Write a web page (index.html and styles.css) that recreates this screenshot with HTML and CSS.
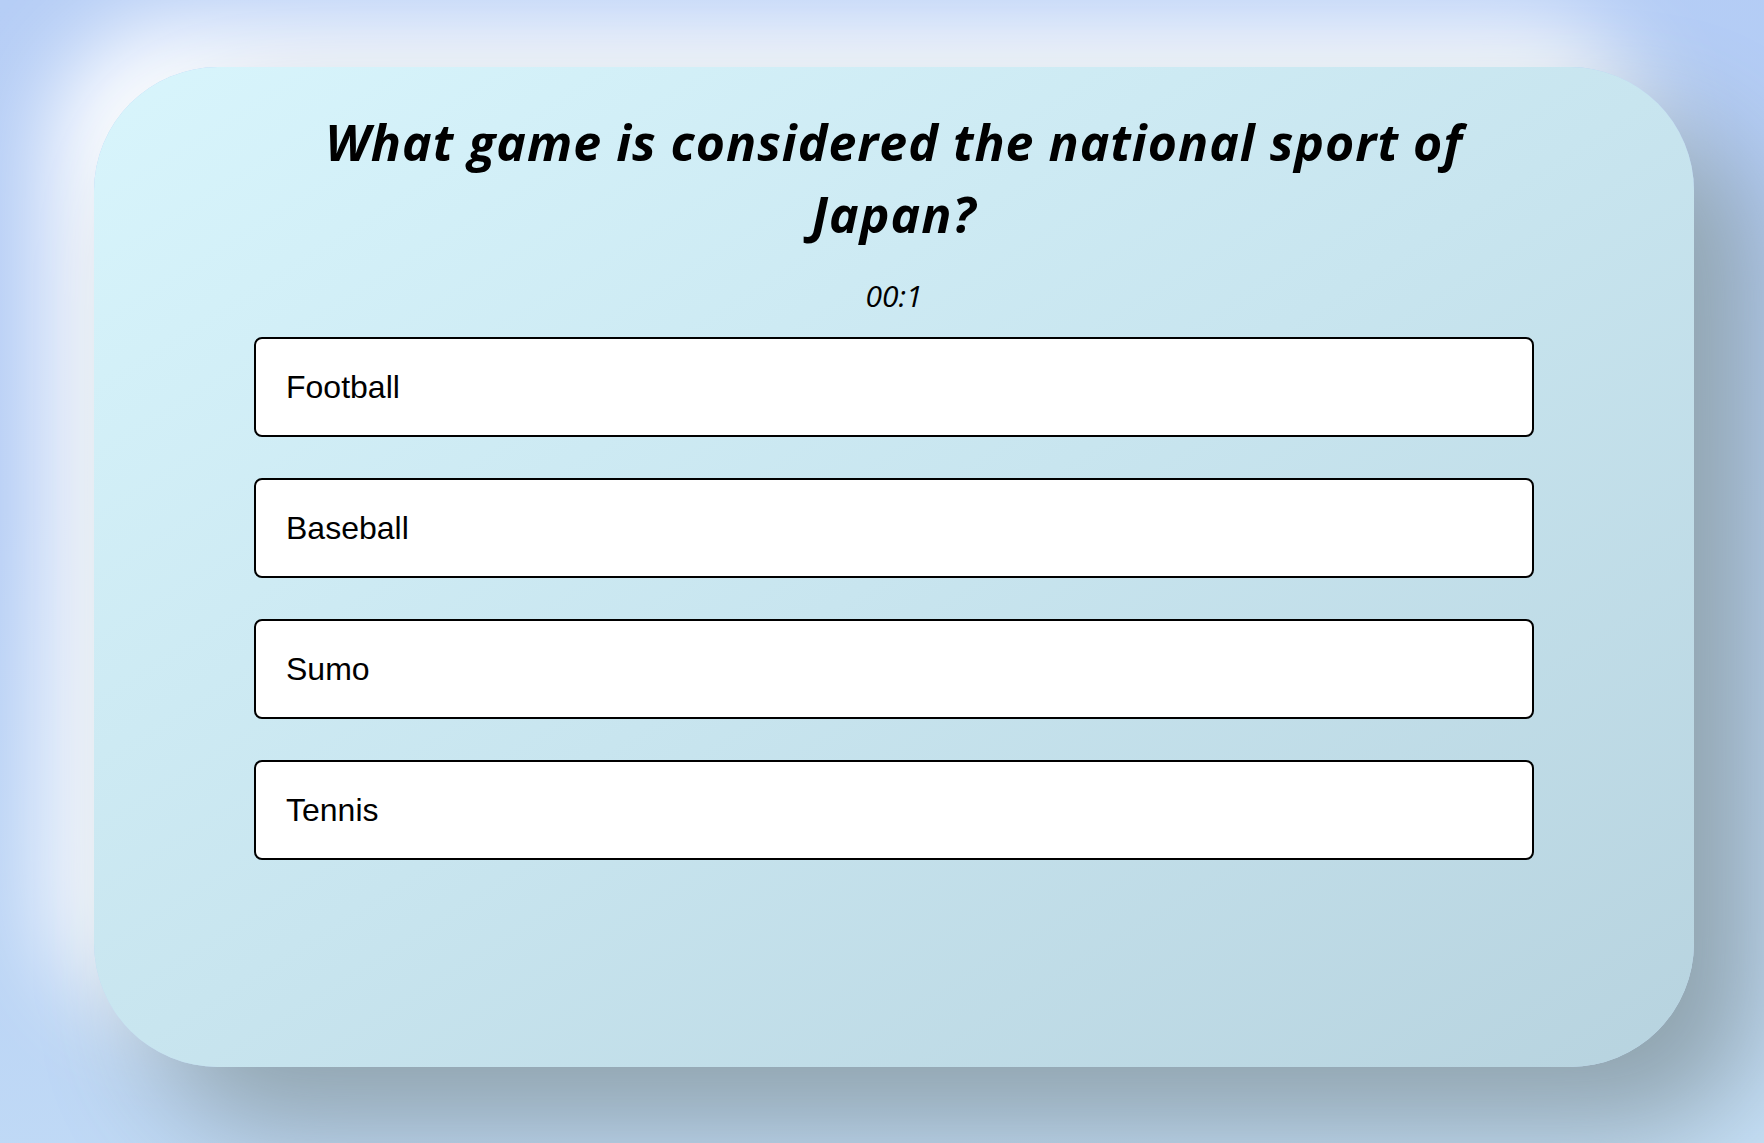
FILE: index.html
```html
<!DOCTYPE html>
<html lang="en">
<head>
<meta charset="utf-8">
<title>Quiz</title>
<link rel="stylesheet" href="styles.css">
</head>
<body>
  <main class="card">
    <h1 class="question">What game is considered the national sport of Japan?</h1>
    <div class="timer">00:1</div>
    <ul class="options">
      <li class="option">Football</li>
      <li class="option">Baseball</li>
      <li class="option">Sumo</li>
      <li class="option">Tennis</li>
    </ul>
  </main>
</body>
</html>
```
FILE: styles.css
```css
html, body {
  margin: 0;
  padding: 0;
  height: 100%;
  overflow: hidden;
}
body {
  background: linear-gradient(170deg, #b6cef6 0%, #b3ccf5 35%, #c5dff6 100%);
  font-family: "Liberation Sans", Arial, sans-serif;
  padding-top: 67px;
  padding-left: 94px;
  box-sizing: border-box;
}
.card {
  width: 1600px;
  height: 1000px;
  box-sizing: border-box;
  border-radius: 124px;
  background: linear-gradient(to bottom right, #d8f5fc 0%, #c8e5ef 50%, #b7d3df 100%);
  box-shadow: 60px 60px 110px #8fa3ae, -45px -45px 90px #ffffff;
  padding-top: 39px;
  display: flex;
  flex-direction: column;
  align-items: center;
}
.question {
  margin: 0;
  max-width: 1220px;
  text-align: center;
  font-family: "Open Sans", sans-serif;
  font-style: italic;
  font-weight: 700;
  font-size: 50px;
  letter-spacing: 1px;
  line-height: 72px;
  color: #000;
}
.timer {
  margin-top: 26px;
  font-family: "Open Sans", sans-serif;
  font-style: italic;
  font-weight: 400;
  font-size: 30px;
  line-height: 40px;
  color: #000;
}
.options {
  list-style: none;
  margin: 21px 0 0;
  padding: 0;
  display: flex;
  flex-direction: column;
  gap: 41px;
}
.option {
  width: 1280px;
  height: 100px;
  box-sizing: border-box;
  border: 2px solid #000;
  border-radius: 8px;
  background: #fff;
  padding: 0 30px;
  display: flex;
  align-items: center;
  font-size: 32px;
  color: #000;
}
```
